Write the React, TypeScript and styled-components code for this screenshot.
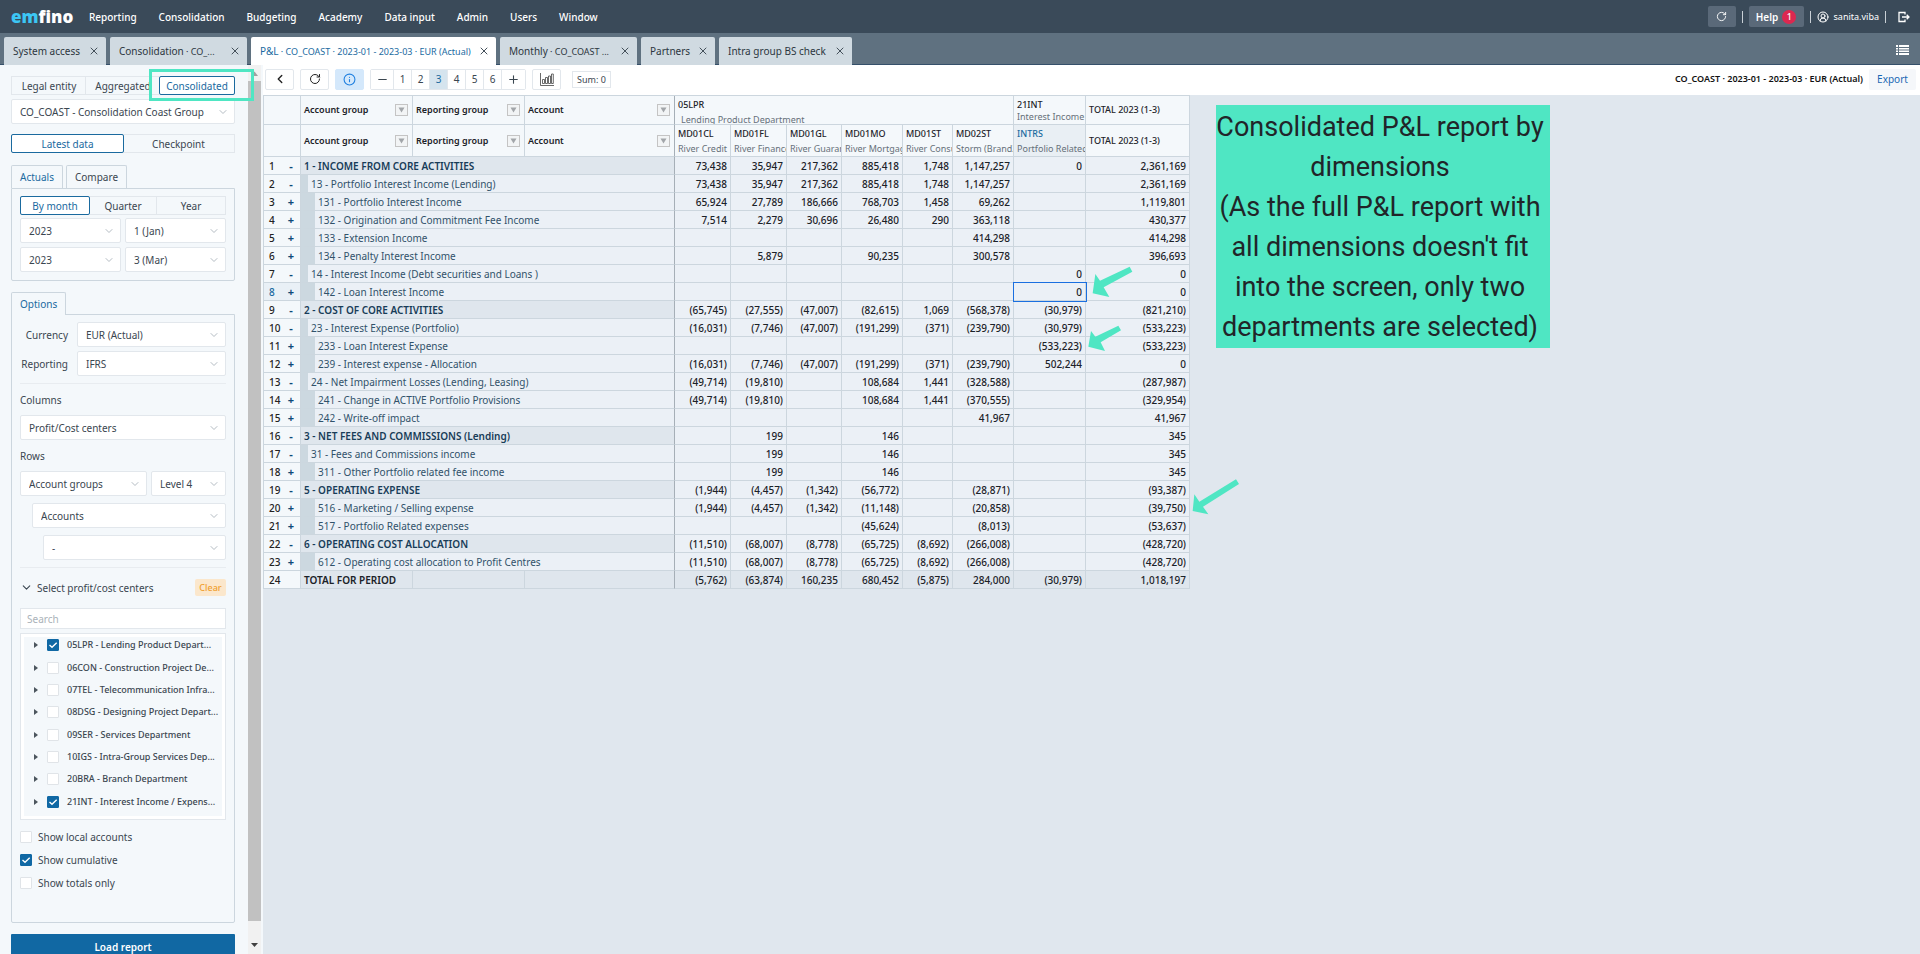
import React from "react";
import styled, { createGlobalStyle, css } from "styled-components";
import { ChevronDown, ChevronLeft, CircleUserRound, Info, Minus, Plus, RotateCw, X } from "lucide-react";

const color = {
  nav: "#3a4a59",
  tabBar: "#5f7180",
  tab: "#d0dae1",
  panel: "#f4f8fb",
  canvas: "#e0e7ee",
  cell: "#ebf0f6",
  group: "#dfe6ed",
  strip: "#ccd8e0",
  line: "#ccd6de",
  softLine: "#e2e7ec",
  text: "#3a4650",
  blue: "#1a6a9f",
  mint: "#4fe6c3",
};

const Global = createGlobalStyle`
  *, *::before, *::after { box-sizing: border-box; }
  body { margin: 0; background: ${color.canvas}; }
  body, button, input, select {
    font-family: "Noto Sans", "Open Sans", sans-serif;
    font-size: 10px;
    line-height: 16px;
    color: ${color.text};
  }
  button { padding: 0; cursor: pointer; }
`;

const Page = styled.div`
  display: flex;
  flex-direction: column;
  height: 100vh;
  overflow: hidden;
`;

/* ---------- Top navigation ---------- */

const TopBar = styled.header`
  flex: none;
  display: flex;
  align-items: center;
  height: 33px;
  padding: 0 10px 0 11px;
  background: ${color.nav};
  color: #fff;
`;

const Logo = styled.a`
  width: 78px;
  font: 800 17px/24px "Open Sans", sans-serif;
  color: #fff;
  text-decoration: none;
  span { color: #3cc6f4; }
`;

const Nav = styled.nav`
  display: flex;
  gap: 22px;
  flex: 1;
`;

const NavLink = styled.a`
  color: #fff;
  font-weight: 500;
  text-decoration: none;
`;

const TopActions = styled.div`
  display: flex;
  align-items: center;
  gap: 6px;
`;

const TopButton = styled.button<{ $wide?: boolean }>`
  display: flex;
  align-items: center;
  justify-content: center;
  gap: 4px;
  width: ${(p) => (p.$wide ? 55 : 28)}px;
  height: 21px;
  border: 0;
  border-radius: 2px;
  background: #5a6979;
  color: #fff;
  font-weight: 600;
`;

const Badge = styled.span`
  width: 14px;
  height: 14px;
  border-radius: 50%;
  background: #dc2850;
  font-size: 9px;
  font-weight: 500;
  line-height: 14px;
  text-align: center;
`;

const Divider = styled.span`
  width: 1px;
  height: 12px;
  background: #c9d0d6;
`;

const User = styled.span`
  display: flex;
  align-items: center;
  gap: 5px;
  font-size: 9px;
`;

const PlainButton = styled.button`
  display: flex;
  border: 0;
  background: none;
  color: inherit;
`;

/* ---------- Document tabs ---------- */

const TabBar = styled.div`
  flex: none;
  display: flex;
  align-items: flex-end;
  gap: 4px;
  height: 32px;
  padding: 0 11px 0 4px;
  background: ${color.tabBar};
  border-bottom: 1px solid #35506a;
`;

const DocTab = styled.div<{ $w: number; $active?: boolean }>`
  display: flex;
  align-items: center;
  justify-content: space-between;
  width: ${(p) => p.$w}px;
  height: 28px;
  margin-bottom: -1px;
  padding: 0 6px 0 9px;
  border-radius: 2px 2px 0 0;
  background: ${(p) => (p.$active ? "#fff" : color.tab)};
  color: ${(p) => (p.$active ? color.blue : "#2c363e")};
  white-space: nowrap;
  small { font-size: 9px; }
  svg { color: #44505a; }
`;

const ListToggle = styled(PlainButton)`
  margin: 0 0 9px auto;
  color: #fff;
`;

/* ---------- Sidebar ---------- */

const Body = styled.div`
  flex: 1;
  display: flex;
  min-height: 0;
`;

const Side = styled.aside`
  position: relative;
  flex: none;
  display: flex;
  width: 263px;
  background: ${color.panel};
`;

const SideContent = styled.form`
  flex: 1;
  display: flex;
  flex-direction: column;
  padding: 11px 13px 0 11px;
  overflow: hidden;
`;

const Highlight = styled.div`
  position: absolute;
  left: 149px;
  top: 4px;
  width: 105px;
  height: 32px;
  border: 3px solid ${color.mint};
  pointer-events: none;
`;

const ScrollTrack = styled.div`
  flex: none;
  display: flex;
  flex-direction: column;
  align-items: center;
  width: 13px;
  margin-right: 2px;
  background: #f1f1f1;
  svg { flex: none; }
`;

const ScrollThumb = styled.div`
  flex: 1;
  width: 100%;
  background: #c1c1c1;
`;

const Segments = styled.div<{ $top?: number }>`
  flex: none;
  display: flex;
  height: 19px;
  margin-top: ${(p) => p.$top || 0}px;
  border: 1px solid ${color.softLine};
`;

const Segment = styled.button<{ $active?: boolean }>`
  flex: 1;
  margin: -1px;
  border: 1px solid transparent;
  border-left-color: ${color.softLine};
  background: none;
  ${(p) =>
    p.$active &&
    css`
      position: relative;
      border-color: ${color.blue};
      border-radius: 2px;
      background: #fff;
      color: ${color.blue};
    `}
`;

const SelectBox = styled.span<{ $w?: number; $indent?: number }>`
  display: grid;
  flex: ${(p) => (p.$w ? "none" : 1)};
  width: ${(p) => (p.$w ? p.$w + "px" : "auto")};
  min-width: 0;
  margin-left: ${(p) => p.$indent || 0}px;
  align-items: center;
  > * { grid-area: 1 / 1; }
  > svg {
    justify-self: end;
    margin-right: 6px;
    color: #b4bcc3;
    pointer-events: none;
  }
`;

const NativeSelect = styled.select`
  appearance: none;
  width: 100%;
  height: 25px;
  padding: 0 20px 0 8px;
  border: 1px solid ${color.softLine};
  border-radius: 2px;
  background: #fff;
`;

const Line = styled.div<{ $top?: number }>`
  flex: none;
  display: flex;
  align-items: center;
  gap: 4px;
  margin-top: ${(p) => p.$top || 0}px;
`;

const PanelTabs = styled.div<{ $top: number }>`
  flex: none;
  display: flex;
  gap: 3px;
  margin-top: ${(p) => p.$top}px;
`;

const PanelTab = styled.button<{ $active?: boolean }>`
  position: relative;
  height: 23px;
  margin-bottom: ${(p) => (p.$active ? -1 : 0)}px;
  padding: 0 8px;
  border: 1px solid ${color.line};
  border-bottom: 0;
  border-radius: 2px 2px 0 0;
  background: ${color.panel};
  color: ${(p) => (p.$active ? color.blue : color.text)};
`;

const Panel = styled.div<{ $bottom?: number }>`
  flex: none;
  display: flex;
  flex-direction: column;
  padding: 7px 8px ${(p) => p.$bottom || 8}px;
  border: 1px solid ${color.line};
  border-radius: 0 0 2px 2px;
`;

const FieldLabel = styled.label`
  width: 48px;
  margin-right: 5px;
  text-align: right;
`;

const GroupLabel = styled.label`
  height: 16px;
  margin: 8px 0 7px;
`;

const Rule = styled.hr`
  width: 100%;
  height: 1px;
  margin: 7px 0 0;
  border: 0;
  background: #e8ecf0;
`;

const SectionToggle = styled(PlainButton)`
  align-items: center;
  gap: 4px;
  flex: 1;
`;

const ClearButton = styled.button`
  width: 31px;
  height: 17px;
  border: 0;
  border-radius: 2px;
  background: #fbe7cc;
  color: #f0a030;
  font-size: 9px;
  font-weight: 500;
`;

const Search = styled.input`
  height: 21px;
  margin-top: 12px;
  padding: 0 6px;
  border: 1px solid ${color.softLine};
  background: #fff;
  &::placeholder { color: #aab2b9; }
`;

const Tree = styled.ul`
  display: flex;
  flex-direction: column;
  height: 187px;
  margin: 4px 0 5px;
  padding: 0 4px 6px 13px;
  border: 1px solid ${color.softLine};
  box-shadow: inset 0 0 0 3px #fff;
  list-style: none;
`;

const TreeItem = styled.li`
  flex: 1;
  display: flex;
  align-items: center;
  gap: 9px;
`;

const Tick = styled.label<{ $small?: boolean }>`
  display: flex;
  align-items: center;
  gap: ${(p) => (p.$small ? 8 : 6)}px;
  height: ${(p) => (p.$small ? 16 : 23)}px;
  font-size: ${(p) => (p.$small ? 9 : 10)}px;
  font-weight: ${(p) => (p.$small ? 500 : 400)};
  white-space: nowrap;
`;

const TickBox = styled.span`
  display: grid;
  place-items: center;
  > * { grid-area: 1 / 1; }
  svg { pointer-events: none; }
`;

const NativeCheck = styled.input`
  appearance: none;
  width: 12px;
  height: 12px;
  margin: 0;
  border: 1px solid #e0e4e8;
  border-radius: 1px;
  background: #fff;
  &:checked { border-color: #1068a4; background: #1068a4; }
`;

const LoadButton = styled.button`
  flex: none;
  height: 26px;
  margin-top: 11px;
  border: 0;
  border-radius: 1px;
  background: #1168a3;
  color: #fff;
  font-weight: 600;
`;

/* ---------- Report ---------- */

const Report = styled.main`
  flex: 1;
  display: flex;
  flex-direction: column;
  min-width: 0;
`;

const Toolbar = styled.div`
  flex: none;
  display: flex;
  align-items: center;
  gap: 6px;
  height: 30px;
  padding: 0 4px 2px 2px;
  background: #fff;
`;

const ToolButton = styled.button<{ $active?: boolean }>`
  display: flex;
  align-items: center;
  justify-content: center;
  width: 29px;
  height: 21px;
  border: 1px solid ${(p) => (p.$active ? "#d4e8fb" : color.softLine)};
  border-radius: 2px;
  background: ${(p) => (p.$active ? "#d4e8fb" : "#fff")};
  color: ${(p) => (p.$active ? "#2080e0" : "#222")};
`;

const Levels = styled.div`
  display: flex;
  height: 21px;
  border: 1px solid ${color.softLine};
  border-radius: 2px;
`;

const Level = styled.button<{ $active?: boolean; $step?: boolean }>`
  display: flex;
  align-items: center;
  justify-content: center;
  width: ${(p) => (p.$step ? 23 : 18)}px;
  border: 0;
  border-right: 1px solid ${color.softLine};
  background: ${(p) => (p.$active ? "#d5e4ee" : "#fff")};
  color: ${(p) => (p.$active ? color.blue : color.text)};
  &:last-child { border-right: 0; }
`;

const Sum = styled.output`
  margin-left: 5px;
  padding: 0 4px;
  border: 1px solid ${color.softLine};
  font-size: 9px;
  line-height: 15px;
`;

const ReportTitle = styled.strong`
  margin-left: auto;
  font-size: 9px;
  font-weight: 600;
  color: #111;
`;

const ExportButton = styled.button`
  width: 47px;
  height: 21px;
  border: 0;
  border-radius: 2px;
  background: #f5f7fa;
  color: #1a68b4;
`;

const Canvas = styled.div`
  flex: 1;
  display: flex;
  align-items: flex-start;
  gap: 26px;
`;

const Sheet = styled.div`
  position: relative;
  flex: none;
  border-top: 1px solid ${color.line};
`;

const Grid = styled.table`
  width: 926px;
  table-layout: fixed;
  border-collapse: separate;
  border-spacing: 0;
  border-left: 1px solid ${color.line};
`;

const cellBase = css`
  height: 18px;
  padding: 0 3px;
  overflow: hidden;
  border-right: 1px solid ${color.line};
  border-bottom: 1px solid ${color.line};
  white-space: nowrap;
  line-height: 16px;
`;

const Head = styled.th<{ $tall?: boolean; $on?: boolean; $edge?: boolean; $flush?: boolean }>`
  ${cellBase}
  height: ${(p) => (p.$tall ? 32 : 29)}px;
  background: ${(p) => (p.$on ? "#e9eff4" : color.panel)};
  color: ${(p) => (p.$on ? color.blue : "#1c2329")};
  ${(p) => p.$edge && "border-right-color: #a6afb7;"}
  ${(p) => p.$flush && "padding-right: 0;"}
  font-size: 9px;
  font-weight: 500;
  text-align: left;
`;

const HeadLabel = styled.div`
  display: flex;
  align-items: center;
  justify-content: space-between;
  font-weight: 600;
`;

const FilterButton = styled.button`
  display: flex;
  align-items: center;
  justify-content: center;
  width: 13px;
  height: 12px;
  margin-right: 1px;
  border: 1px solid #c4c4c4;
  background: #f2f4f5;
`;

const Code = styled.span<{ $close?: boolean }>`
  display: block;
  height: ${(p) => (p.$close ? 14 : 17)}px;
  line-height: 17px;
`;

const CodeName = styled.span<{ $cut?: boolean }>`
  display: block;
  height: ${(p) => (p.$cut ? 11 : 14)}px;
  padding-left: ${(p) => (p.$cut ? 3 : 0)}px;
  overflow: hidden;
  line-height: 14px;
  font-weight: 400;
  color: #66707a;
`;

const RowHead = styled.th<{ $on?: boolean }>`
  ${cellBase}
  padding: 0 5px;
  background: ${(p) => (p.$on ? "#e9f0f6" : color.panel)};
  color: ${(p) => (p.$on ? color.blue : "#222")};
  font-weight: 500;
`;

const RowHeadInner = styled.div`
  display: flex;
  justify-content: space-between;
`;

const Expander = styled.button`
  width: 8px;
  height: 16px;
  border: 0;
  background: none;
  color: #0d4a78;
  font-size: 11px;
  font-weight: 700;
`;

const Account = styled.th<{ $level: number }>`
  ${cellBase}
  border-right-color: #a6afb7;
  border-left: ${(p) => [0, 7, 14][p.$level]}px solid ${color.strip};
  background: ${(p) => (p.$level ? color.cell : color.group)};
  color: ${(p) => (p.$level ? "#31526a" : "#173c58")};
  font-weight: ${(p) => (p.$level ? 400 : 600)};
  text-align: left;
`;

const Value = styled.td<{ $selected?: boolean; $total?: boolean; $edge?: boolean; $label?: boolean }>`
  ${cellBase}
  background: ${(p) => (p.$total ? color.group : color.cell)};
  color: #1b2228;
  font-weight: ${(p) => (p.$label ? 600 : 500)};
  text-align: ${(p) => (p.$label ? "left" : "right")};
  ${(p) => p.$edge && "border-right-color: #a6afb7;"}
  ${(p) => p.$selected && "outline: 1px solid #1a6fe0;"}
`;

const Arrow = styled.svg<{ $x: number; $y: number }>`
  position: absolute;
  left: ${(p) => p.$x}px;
  top: ${(p) => p.$y}px;
  fill: ${color.mint};
  pointer-events: none;
`;

const Callout = styled.p`
  width: 334px;
  margin: 10px 0 0;
  padding: 2px 6px 1px 0;
  background: ${color.mint};
  color: #212529;
  font: 400 27px/40px Roboto, sans-serif;
  text-align: center;
`;

/* ---------- Data ---------- */

const navItems = ["Reporting", "Consolidation", "Budgeting", "Academy", "Data input", "Admin", "Users", "Window"];

const docTabs: { name: string; detail?: string; w: number; active?: boolean }[] = [
  { name: "System access", w: 102 },
  { name: "Consolidation", detail: " · CO_...", w: 137 },
  { name: "P&L", detail: " · CO_COAST · 2023-01 - 2023-03 · EUR (Actual)", w: 245, active: true },
  { name: "Monthly", detail: " · CO_COAST ...", w: 137 },
  { name: "Partners", w: 74 },
  { name: "Intra group BS check", w: 133 },
];

const centers: [string, boolean][] = [
  ["05LPR - Lending Product Depart...", true],
  ["06CON - Construction Project De...", false],
  ["07TEL - Telecommunication Infra...", false],
  ["08DSG - Designing Project Depart...", false],
  ["09SER - Services Department", false],
  ["10IGS - Intra-Group Services Dep...", false],
  ["20BRA - Branch Department", false],
  ["21INT - Interest Income / Expens...", true],
];

const columnWidths = [37, 112, 112, 150, 56, 56, 55, 61, 50, 61, 72, 104];

const departments = [
  ["MD01CL", "River Credit"],
  ["MD01FL", "River Finance"],
  ["MD01GL", "River Guarantee"],
  ["MD01MO", "River Mortgage"],
  ["MD01ST", "River Consumer"],
  ["MD02ST", "Storm (Brand2)"],
  ["INTRS", "Portfolio Related"],
];

type Row = [sign: string, level: number, name: string, values: string];

const rows: Row[] = [
  ["-", 0, "1 - INCOME FROM CORE ACTIVITIES", "73,438|35,947|217,362|885,418|1,748|1,147,257|0|2,361,169"],
  ["-", 1, "13 - Portfolio Interest Income (Lending)", "73,438|35,947|217,362|885,418|1,748|1,147,257||2,361,169"],
  ["+", 2, "131 - Portfolio Interest Income", "65,924|27,789|186,666|768,703|1,458|69,262||1,119,801"],
  ["+", 2, "132 - Origination and Commitment Fee Income", "7,514|2,279|30,696|26,480|290|363,118||430,377"],
  ["+", 2, "133 - Extension Income", "|||||414,298||414,298"],
  ["+", 2, "134 - Penalty Interest Income", "|5,879||90,235||300,578||396,693"],
  ["-", 1, "14 - Interest Income (Debt securities and Loans )", "||||||0|0"],
  ["+", 2, "142 - Loan Interest Income", "||||||0|0"],
  ["-", 0, "2 - COST OF CORE ACTIVITIES", "(65,745)|(27,555)|(47,007)|(82,615)|1,069|(568,378)|(30,979)|(821,210)"],
  ["-", 1, "23 - Interest Expense (Portfolio)", "(16,031)|(7,746)|(47,007)|(191,299)|(371)|(239,790)|(30,979)|(533,223)"],
  ["+", 2, "233 - Loan Interest Expense", "||||||(533,223)|(533,223)"],
  ["+", 2, "239 - Interest expense - Allocation", "(16,031)|(7,746)|(47,007)|(191,299)|(371)|(239,790)|502,244|0"],
  ["-", 1, "24 - Net Impairment Losses (Lending, Leasing)", "(49,714)|(19,810)||108,684|1,441|(328,588)||(287,987)"],
  ["+", 2, "241 - Change in ACTIVE Portfolio Provisions", "(49,714)|(19,810)||108,684|1,441|(370,555)||(329,954)"],
  ["+", 2, "242 - Write-off impact", "|||||41,967||41,967"],
  ["-", 0, "3 - NET FEES AND COMMISSIONS (Lending)", "|199||146||||345"],
  ["-", 1, "31 - Fees and Commissions income", "|199||146||||345"],
  ["+", 2, "311 - Other Portfolio related fee income", "|199||146||||345"],
  ["-", 0, "5 - OPERATING EXPENSE", "(1,944)|(4,457)|(1,342)|(56,772)||(28,871)||(93,387)"],
  ["+", 2, "516 - Marketing / Selling expense", "(1,944)|(4,457)|(1,342)|(11,148)||(20,858)||(39,750)"],
  ["+", 2, "517 - Portfolio Related expenses", "|||(45,624)||(8,013)||(53,637)"],
  ["-", 0, "6 - OPERATING COST ALLOCATION", "(11,510)|(68,007)|(8,778)|(65,725)|(8,692)|(266,008)||(428,720)"],
  ["+", 2, "612 - Operating cost allocation to Profit Centres", "(11,510)|(68,007)|(8,778)|(65,725)|(8,692)|(266,008)||(428,720)"],
];

const totals = "(5,762)|(63,874)|160,235|680,452|(5,875)|284,000|(30,979)|1,018,197".split("|");

/* ---------- Small parts ---------- */

function Select({ value, label, id, w, indent }: { value: string; label?: string; id?: string; w?: number; indent?: number }) {
  return (
    <SelectBox $w={w} $indent={indent}>
      <NativeSelect id={id} aria-label={label} defaultValue={value}>
        <option>{value}</option>
      </NativeSelect>
      <ChevronDown size={12} strokeWidth={2} />
    </SelectBox>
  );
}

function Checkbox({ text, checked, small }: { text: string; checked?: boolean; small?: boolean }) {
  return (
    <Tick $small={small}>
      <TickBox>
        <NativeCheck type="checkbox" defaultChecked={checked} />
        {checked && (
          <svg width="10" height="10" viewBox="0 0 10 10" fill="none" stroke="#fff" strokeWidth="1.4">
            <path d="M1.5 5 L4 7.3 L8.7 2.8" />
          </svg>
        )}
      </TickBox>
      {text}
    </Tick>
  );
}

const frozenHeads = ["Account group", "Reporting group", "Account"];

function FrozenHeads({ tall }: { tall?: boolean }) {
  return (
    <>
      <Head $tall={tall} aria-label="Row" />
      {frozenHeads.map((h, i) => (
        <Head key={h} $tall={tall} $edge={i === 2}>
          <HeadLabel>
            {h}
            <FilterButton type="button" aria-label={"Filter " + h}>
              <svg width="7" height="6" viewBox="0 0 7 6" fill="#a2a6aa"><path d="M0.5 0.5H6.5L3.5 5.5Z" /></svg>
            </FilterButton>
          </HeadLabel>
        </Head>
      ))}
    </>
  );
}

/* ---------- Page sections ---------- */

function Sidebar() {
  return (
    <Side>
      <SideContent>
        <Segments>
          <Segment type="button">Legal entity</Segment>
          <Segment type="button">Aggregated</Segment>
          <Segment type="button" $active>Consolidated</Segment>
        </Segments>
        <Line $top={4}><Select label="Company" value="CO_COAST - Consolidation Coast Group" /></Line>
        <Segments $top={10}>
          <Segment type="button" $active>Latest data</Segment>
          <Segment type="button">Checkpoint</Segment>
        </Segments>

        <PanelTabs $top={12}>
          <PanelTab type="button" $active>Actuals</PanelTab>
          <PanelTab type="button">Compare</PanelTab>
        </PanelTabs>
        <Panel>
          <Segments>
            <Segment type="button" $active>By month</Segment>
            <Segment type="button">Quarter</Segment>
            <Segment type="button">Year</Segment>
          </Segments>
          <Line $top={3}>
            <Select label="From year" value="2023" />
            <Select label="From month" value="1 (Jan)" />
          </Line>
          <Line $top={4}>
            <Select label="To year" value="2023" />
            <Select label="To month" value="3 (Mar)" />
          </Line>
        </Panel>

        <PanelTabs $top={11}>
          <PanelTab type="button" $active>Options</PanelTab>
        </PanelTabs>
        <Panel $bottom={28}>
          <Line>
            <FieldLabel htmlFor="currency">Currency</FieldLabel>
            <Select id="currency" value="EUR (Actual)" />
          </Line>
          <Line $top={4}>
            <FieldLabel htmlFor="reporting">Reporting</FieldLabel>
            <Select id="reporting" value="IFRS" />
          </Line>
          <Rule />
          <GroupLabel htmlFor="columns">Columns</GroupLabel>
          <Line><Select id="columns" value="Profit/Cost centers" /></Line>
          <GroupLabel htmlFor="rows">Rows</GroupLabel>
          <Line>
            <Select id="rows" value="Account groups" />
            <Select label="Level" value="Level 4" w={75} />
          </Line>
          <Line $top={7}><Select label="Second row level" value="Accounts" indent={12} /></Line>
          <Line $top={7}><Select label="Third row level" value="-" indent={23} /></Line>
          <Rule />
          <Line $top={11}>
            <SectionToggle type="button">
              <ChevronDown size={13} strokeWidth={2} />
              Select profit/cost centers
            </SectionToggle>
            <ClearButton type="button">Clear</ClearButton>
          </Line>
          <Search type="text" placeholder="Search" aria-label="Search centers" />
          <Tree>
            {centers.map(([name, on]) => (
              <TreeItem key={name}>
                <svg width="4" height="6" viewBox="0 0 4 6" fill="#4c565e"><path d="M0 0L4 3L0 6Z" /></svg>
                <Checkbox text={name} checked={on} small />
              </TreeItem>
            ))}
          </Tree>
          <Checkbox text="Show local accounts" />
          <Checkbox text="Show cumulative" checked />
          <Checkbox text="Show totals only" />
        </Panel>
        <LoadButton type="button">Load report</LoadButton>
      </SideContent>
      <ScrollTrack>
        <svg width="13" height="16" viewBox="0 0 13 16" fill="#a0a0a0"><path d="M3 11H10L6.5 6.5Z" /></svg>
        <ScrollThumb />
        <svg width="13" height="33" viewBox="0 0 13 33" fill="#404040"><path d="M3 22H10L6.5 26Z" /></svg>
      </ScrollTrack>
      <Highlight />
    </Side>
  );
}

function ReportGrid() {
  return (
    <Sheet>
      <Grid>
        <colgroup>
          {columnWidths.map((w, i) => <col key={i} width={w} />)}
        </colgroup>
        <thead>
          <tr>
            <FrozenHeads />
            <Head colSpan={6}>
              <Code>05LPR</Code>
              <CodeName $cut>Lending Product Department</CodeName>
            </Head>
            <Head $flush>
              <Code $close>21INT</Code>
              <CodeName>Interest Income</CodeName>
            </Head>
            <Head>TOTAL 2023 (1-3)</Head>
          </tr>
          <tr>
            <FrozenHeads tall />
            {departments.map(([code, name]) => (
              <Head key={code} $tall $flush $on={code === "INTRS"}>
                <Code>{code}</Code>
                <CodeName>{name}</CodeName>
              </Head>
            ))}
            <Head $tall>TOTAL 2023 (1-3)</Head>
          </tr>
        </thead>
        <tbody>
          {rows.map(([sign, level, name, values], i) => (
            <tr key={name}>
              <RowHead $on={i === 7}>
                <RowHeadInner>
                  {i + 1}
                  <Expander type="button">{sign}</Expander>
                </RowHeadInner>
              </RowHead>
              <Account colSpan={3} $level={level}>{name}</Account>
              {values.split("|").map((v, c) => (
                <Value key={c} $selected={i === 7 && c === 6}>{v}</Value>
              ))}
            </tr>
          ))}
          <tr>
            <RowHead><RowHeadInner>24</RowHeadInner></RowHead>
            <Value $total $label>TOTAL FOR PERIOD</Value>
            <Value $total />
            <Value $total $edge />
            {totals.map((v, c) => <Value key={c} $total>{v}</Value>)}
          </tr>
        </tbody>
      </Grid>
      <Arrow $x={829} $y={170} width="41" height="32" viewBox="36 33 123 96">
        <path d="M38 115L46 57L60 77L149 35L157 50L71 97L88 126Z" />
      </Arrow>
      <Arrow $x={825} $y={229} width="34" height="27" viewBox="24 210 102 81">
        <path d="M25 275L33 228L46 245L115 212L123 226L62 262L75 288Z" />
      </Arrow>
      <Arrow $x={929} $y={383} width="48" height="36" viewBox="36 27 144 108">
        <path d="M38 123L43 73L58 95L168 28L177 42L69 110L85 133Z" />
      </Arrow>
    </Sheet>
  );
}

export default function App() {
  return (
    <Page>
      <Global />
      <TopBar>
        <Logo href="#"><span>em</span>fino</Logo>
        <Nav>
          {navItems.map((n) => <NavLink key={n} href="#">{n}</NavLink>)}
        </Nav>
        <TopActions>
          <TopButton type="button" aria-label="Reload"><RotateCw size={11} strokeWidth={2} /></TopButton>
          <Divider />
          <TopButton type="button" $wide>Help <Badge>1</Badge></TopButton>
          <Divider />
          <User><CircleUserRound size={12} strokeWidth={2} />sanita.viba</User>
          <Divider />
          <PlainButton type="button" aria-label="Log out">
            <svg width="18" height="12" viewBox="-6 0 18 12" fill="none" stroke="#fff" strokeWidth="1.3">
              <path d="M7 3.5V1.5H1V10.5H7V8.5M4 6H11M8.7 3.7L11 6L8.7 8.3" />
            </svg>
          </PlainButton>
        </TopActions>
      </TopBar>
      <TabBar>
        {docTabs.map((t) => (
          <DocTab key={t.name} $w={t.w} $active={t.active}>
            <span>{t.name}{t.detail && <small>{t.detail}</small>}</span>
            <PlainButton type="button" aria-label={"Close " + t.name}><X size={12} strokeWidth={2} /></PlainButton>
          </DocTab>
        ))}
        <ListToggle type="button" aria-label="List of tabs">
          <svg width="13" height="10" viewBox="0 0 13 10" fill="#fff">
            <path d="M0 0H2V2H0ZM3 0H13V2H3ZM0 3H2V4.5H0ZM3 3H13V4.5H3ZM0 5.5H2V7H0ZM3 5.5H13V7H3ZM0 8H2V10H0ZM3 8H13V10H3Z" />
          </svg>
        </ListToggle>
      </TabBar>
      <Body>
        <Sidebar />
        <Report>
          <Toolbar>
            <ToolButton type="button" aria-label="Back"><ChevronLeft size={14} strokeWidth={2.4} /></ToolButton>
            <ToolButton type="button" aria-label="Refresh"><RotateCw size={12} strokeWidth={2} /></ToolButton>
            <ToolButton type="button" aria-label="Information" $active><Info size={13} strokeWidth={2} /></ToolButton>
            <Levels>
              <Level type="button" $step aria-label="Fewer levels"><Minus size={13} strokeWidth={2} /></Level>
              {[1, 2, 3, 4, 5, 6].map((n) => <Level key={n} type="button" $active={n === 3}>{n}</Level>)}
              <Level type="button" $step aria-label="More levels"><Plus size={13} strokeWidth={2} /></Level>
            </Levels>
            <ToolButton type="button" aria-label="Chart">
              <svg width="14" height="13" viewBox="0 0 14 13" fill="none" stroke="#444" strokeWidth="0.8">
                <path d="M0.5 0V12.5H14M2.5 10.5V6.5H4.5V10.5ZM5.5 10.5V4.5H7.5V10.5ZM8.5 10.5V3H10.5V10.5ZM11.5 10.5V1H13.3V10.5Z" />
              </svg>
            </ToolButton>
            <Sum>Sum: 0</Sum>
            <ReportTitle>CO_COAST · 2023-01 - 2023-03 · EUR (Actual)</ReportTitle>
            <ExportButton type="button">Export</ExportButton>
          </Toolbar>
          <Canvas>
            <ReportGrid />
            <Callout>
              Consolidated P&amp;L report by dimensions
              <br />
              (As the full P&amp;L report with all dimensions doesn't fit into the screen, only two departments are selected)
            </Callout>
          </Canvas>
        </Report>
      </Body>
    </Page>
  );
}
